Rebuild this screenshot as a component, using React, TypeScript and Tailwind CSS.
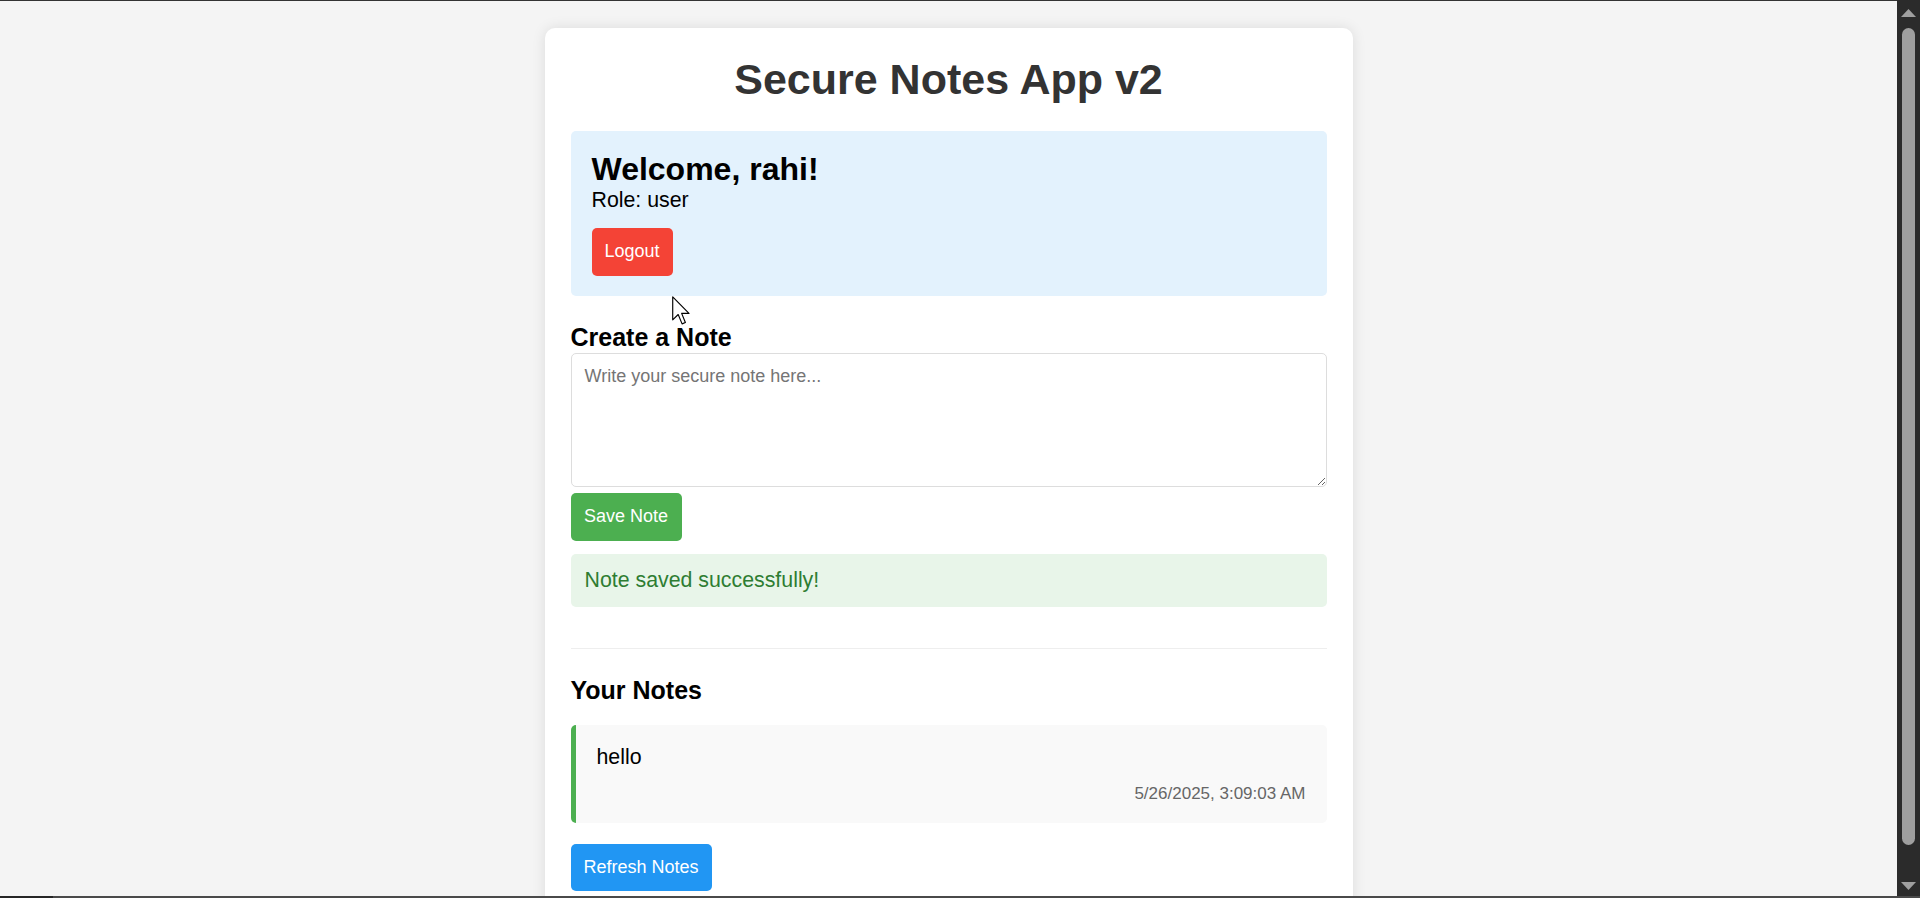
const notes = [
  { id: 1, content: 'hello', createdAt: '5/26/2025, 3:09:03 AM' },
];

const App = () => {
  return (
    <div className="h-screen overflow-y-scroll border-t border-[#333] bg-[#f4f4f4] pt-[27px] pr-[23px] pb-[34px] font-['Liberation_Sans',Arial,sans-serif] text-black">
      {/* main card */}
      <div className="mx-auto w-[808px] rounded-[10px] bg-white px-[26px] pt-[26px] pb-[26px] shadow-[0_0_14px_rgba(0,0,0,0.1)]">
        <h1 className="text-center text-[43px] leading-[50px] font-bold text-[#333]">
          Secure Notes App v2
        </h1>

        {/* user info */}
        <div className="mt-[27px] rounded-[5px] bg-[#e3f2fd] px-[21px] pt-[20px] pb-[20px]">
          <h2 className="text-[32px] leading-[37px] font-bold">Welcome, rahi!</h2>
          <p className="text-[21.33px] leading-[24px]">Role: user</p>
          <button className="mt-[16px] h-[47.5px] rounded-[5px] bg-[#f44336] px-[13px] text-[18px] text-white">
            Logout
          </button>
        </div>

        {/* create note */}
        <h3 className="mt-[27px] text-[25px] leading-[29px] font-bold">Create a Note</h3>
        <textarea
          className="mt-[1px] block h-[134px] w-full resize-y rounded-[5px] border border-[#ddd] px-[13px] pt-[12px] text-[18px] leading-[21px] outline-none placeholder:text-[#757575]"
          placeholder="Write your secure note here..."
        />
        <button className="mt-[6px] h-[48px] rounded-[5px] bg-[#4caf50] px-[13.5px] text-[18px] text-white">
          Save Note
        </button>
        <div className="mt-[13.5px] rounded-[5px] bg-[#e8f5e9] px-[14px] py-[14px] text-[21.33px] leading-[24.5px] text-[#2e7d32]">
          Note saved successfully!
        </div>

        <hr className="mt-[41.5px] border-t border-[#eee]" />

        {/* notes list */}
        <h3 className="mt-[27px] text-[25px] leading-[29px] font-bold">Your Notes</h3>
        <div className="mt-[20px] flex flex-col gap-[14px]">
          {notes.map((note) => (
            <div
              key={note.id}
              className="rounded-[5px] border-l-[5px] border-[#4caf50] bg-[#f9f9f9] px-[21px] py-[20px]"
            >
              <p className="text-[21.33px] leading-[24.5px]">{note.content}</p>
              <p className="mt-[14px] text-right text-[17px] leading-[19.5px] text-[#666]">
                {note.createdAt}
              </p>
            </div>
          ))}
        </div>
        <button className="mt-[20.5px] h-[47.5px] rounded-[5px] bg-[#2196f3] px-[13px] text-[18px] text-white">
          Refresh Notes
        </button>
      </div>

      {/* browser scrollbar (dark theme) */}
      <div className="pointer-events-none fixed top-0 right-0 flex h-screen w-[23px] flex-col items-center bg-[#2b2b2b] pt-[9px]">
        <svg width="15" height="8" viewBox="0 0 15 8">
          <path d="M7.5 0 L15 8 L0 8 Z" fill="#9f9f9f" />
        </svg>
        <div className="mt-[11px] h-[817px] w-[13px] rounded-full bg-[#9f9f9f]" />
        <svg className="mt-[37px]" width="15" height="8" viewBox="0 0 15 8">
          <path d="M0 0 L15 0 L7.5 8 Z" fill="#9f9f9f" />
        </svg>
      </div>

      {/* window bottom edge */}
      <div className="pointer-events-none fixed bottom-0 left-0 flex h-[2px] w-full">
        <div className="w-[53px] bg-[#262626]" />
        <div className="flex-1 bg-[#4a4a4a]" />
      </div>

      {/* mouse pointer */}
      <svg
        className="pointer-events-none fixed left-[672px] top-[296px]"
        width="18"
        height="29"
        viewBox="0 0 12.5 20"
      >
        <path
          d="M0.5 0.5 L0.5 16.5 L4.3 12.8 L7 19.3 L9.3 18.3 L6.7 12 L11.8 12 Z"
          fill="white"
          stroke="black"
          strokeWidth="0.8"
          strokeLinejoin="round"
        />
      </svg>
    </div>
  );
};

export default App;
